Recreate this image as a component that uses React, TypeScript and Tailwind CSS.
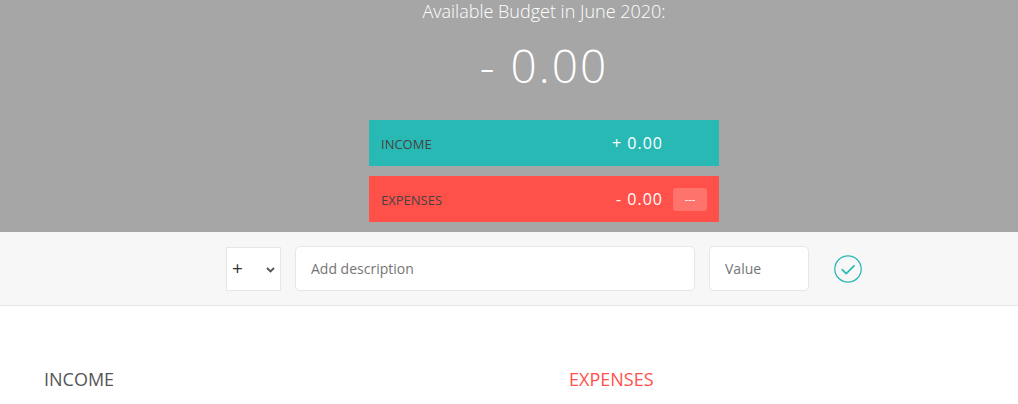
import { useState } from "react";

function CheckCircle() {
	return (
		<svg width="28" height="28" viewBox="0 0 28 28" fill="none">
			<circle cx="14" cy="14" r="13.2" stroke="#28B9B5" strokeWidth="1.3" />
			<path d="M8.2 14.6 L12.2 18.6 L20 10.8" stroke="#28B9B5" strokeWidth="1.7" strokeLinecap="round" strokeLinejoin="round" />
		</svg>
	);
}

export default function App() {
	const [type, setType] = useState("inc");

	return (
		<div className="w-[1018px] h-[404px] overflow-hidden bg-white">
			<div className="w-[1088px] text-[#555] font-['Open_Sans','Liberation_Sans',sans-serif]">
				{/* top */}
				<div className="h-[232px] bg-[#a6a6a6] flex flex-col items-center">
					<div className="w-[350px] text-white">
						<div className="text-center text-[18px] font-light leading-[22px]">Available Budget in June 2020:</div>
						<div className="mt-[13px] text-center text-[46px] font-light leading-[60px] tracking-[2px]">- 0.00</div>

						<div className="mt-[25px] h-[46px] px-3 pt-3 flex justify-between uppercase bg-[#28B9B5]">
							<div className="mt-[3px] text-[13px] text-[#444]">Income</div>
							<div className="flex items-start">
								<div className="text-[16px] leading-[22px] tracking-[1px]">+ 0.00</div>
								<div className="ml-[10px] w-[34px] py-[3px] text-[11px]">&nbsp;</div>
							</div>
						</div>

						<div className="mt-[10px] h-[46px] px-3 pt-3 flex justify-between uppercase bg-[#FF5049]">
							<div className="mt-[3px] text-[13px] text-[#444]">Expenses</div>
							<div className="flex items-start">
								<div className="text-[16px] leading-[22px] tracking-[1px]">- 0.00</div>
								<div className="ml-[10px] w-[34px] py-[3px] text-[11px] text-center rounded-[3px] bg-white/20">---</div>
							</div>
						</div>
					</div>
				</div>

				{/* add */}
				<div className="bg-[#f7f7f7] border-b border-[#e7e7e7] py-[14px] flex items-center justify-center">
					<div className="relative w-[55px] h-[44px]">
						<select
							value={type}
							onChange={(e) => setType(e.target.value)}
							className="appearance-none w-full h-full border border-[#e7e7e7] bg-white pl-[5px] text-[19px] font-normal text-[#333] outline-none"
						>
							<option value="inc">+</option>
							<option value="exp">-</option>
						</select>
						<svg className="absolute right-[6px] top-[20px] pointer-events-none" width="9" height="6" viewBox="0 0 9 6" fill="none">
							<path d="M1 1 L4.5 4.5 L8 1" stroke="#555" strokeWidth="1.8" />
						</svg>
					</div>
					<input
						type="text"
						placeholder="Add description"
						className="ml-[14px] w-[400px] h-[45px] px-[15px] border border-[#e7e7e7] rounded-[5px] bg-white text-[14px] outline-none placeholder:text-[#757575]"
					/>
					<input
						type="number"
						placeholder="Value"
						className="ml-[14px] w-[100px] h-[45px] px-[15px] border border-[#e7e7e7] rounded-[5px] bg-white text-[14px] outline-none placeholder:text-[#757575]"
					/>
					<button className="ml-[25px] w-[28px] h-[28px] flex items-center justify-center">
						<CheckCircle />
					</button>
				</div>

				{/* lists */}
				<div className="w-[1000px] mx-auto mt-[60px] flex">
					<div className="w-[475px] mr-[50px]">
						<h2 className="text-[18px] font-normal uppercase text-[#555]">Income</h2>
					</div>
					<div className="w-[475px]">
						<h2 className="text-[18px] font-normal uppercase text-[#FF5049]">Expenses</h2>
					</div>
				</div>
			</div>
		</div>
	);
}
